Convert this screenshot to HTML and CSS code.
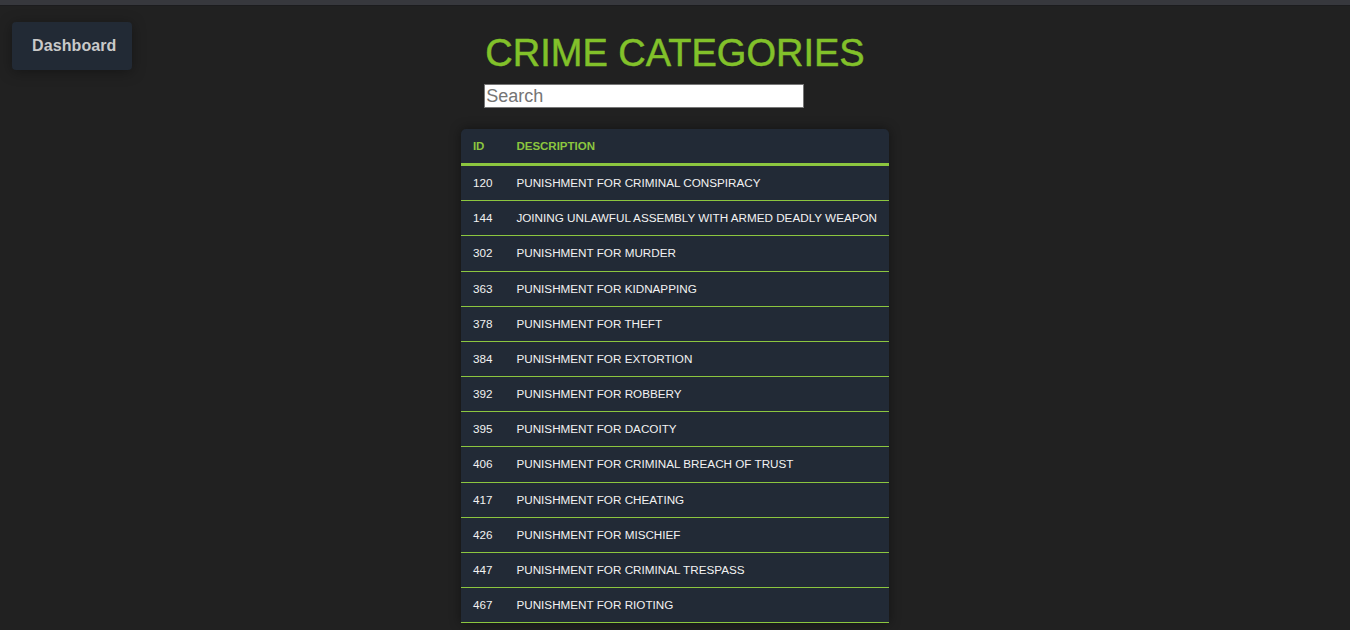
FILE: index.html
```html
<!DOCTYPE html>
<html>
<head>
<meta charset="utf-8">
<title>Crime Categories</title>
<link rel="stylesheet" href="styles.css">
</head>
<body>
<div class="topbar"></div>
<div class="page">
  <div class="nav">
    <button class="dash-btn">Dashboard</button>
  </div>
  <main class="content">
    <div class="head">
      <h1 class="title">CRIME CATEGORIES</h1>
      <input class="search" type="text" placeholder="Search">
    </div>
    <table class="crimes">
      <thead>
        <tr><th>ID</th><th>DESCRIPTION</th></tr>
      </thead>
      <tbody>
        <tr><td>120</td><td>PUNISHMENT FOR CRIMINAL CONSPIRACY</td></tr>
        <tr><td>144</td><td>JOINING UNLAWFUL ASSEMBLY WITH ARMED DEADLY WEAPON</td></tr>
        <tr><td>302</td><td>PUNISHMENT FOR MURDER</td></tr>
        <tr><td>363</td><td>PUNISHMENT FOR KIDNAPPING</td></tr>
        <tr><td>378</td><td>PUNISHMENT FOR THEFT</td></tr>
        <tr><td>384</td><td>PUNISHMENT FOR EXTORTION</td></tr>
        <tr><td>392</td><td>PUNISHMENT FOR ROBBERY</td></tr>
        <tr><td>395</td><td>PUNISHMENT FOR DACOITY</td></tr>
        <tr><td>406</td><td>PUNISHMENT FOR CRIMINAL BREACH OF TRUST</td></tr>
        <tr><td>417</td><td>PUNISHMENT FOR CHEATING</td></tr>
        <tr><td>426</td><td>PUNISHMENT FOR MISCHIEF</td></tr>
        <tr><td>447</td><td>PUNISHMENT FOR CRIMINAL TRESPASS</td></tr>
        <tr><td>467</td><td>PUNISHMENT FOR RIOTING</td></tr>
      </tbody>
    </table>
  </main>
  <div class="spacer"></div>
</div>
</body>
</html>
```
FILE: styles.css
```css
html, body {
  margin: 0;
  padding: 0;
  background: #212121;
  font-family: "Liberation Sans", Arial, sans-serif;
  overflow: hidden;
  height: 630px;
}
.topbar {
  height: 5px;
  background: #37383d;
  border-bottom: 1px solid #1c1c1e;
}
.page {
  display: grid;
  grid-template-columns: 1fr auto 1fr;
}
.nav {
  padding: 16px 0 0 12px;
}
.dash-btn {
  width: 120px;
  height: 48px;
  background: #222a35;
  color: #c9c9c9;
  border: none;
  border-radius: 4px;
  font-family: "Liberation Sans", Arial, sans-serif;
  font-size: 16px;
  font-weight: bold;
  box-shadow: 0 2px 14px rgba(0, 0, 0, 0.35);
  padding: 0 0 0 20px;
  text-align: left;
  letter-spacing: 0.1px;
}
.content {
  display: flex;
  flex-direction: column;
  align-items: center;
}
.head {
  display: flex;
  flex-direction: column;
  align-items: flex-start;
  padding-top: 25px;
}
.title {
  margin: 0;
  font-size: 38px;
  font-weight: normal;
  line-height: 45px;
  color: #82c12a;
  -webkit-text-stroke: 0.5px #82c12a;
}
.search {
  margin-top: 8px;
  margin-left: -1px;
  width: 320px;
  height: 24px;
  box-sizing: border-box;
  border: 1px solid #767676;
  padding: 0 1px;
  font-family: "Liberation Sans", Arial, sans-serif;
  font-size: 18px;
  background: #fff;
  color: #222;
  outline: none;
}
.search::placeholder {
  color: #757575;
}
.crimes {
  margin-top: 21px;
  border-collapse: collapse;
  background: #222a36;
  border-radius: 5px 5px 0 0;
  box-shadow: 0 0 12px rgba(0, 0, 0, 0.45);
  font-size: 11.7px;
}
.crimes th {
  text-align: left;
  color: #8cc63f;
  font-size: 11.5px;
  font-weight: bold;
  padding: 10px 12px;
  line-height: 14px;
  border-bottom: 3px solid #8cc63f;
}
.crimes td {
  color: #f2f2f2;
  padding: 10px 12px;
  line-height: 14.17px;
  border-bottom: 1px solid #8cc63f;
  white-space: nowrap;
}
```
